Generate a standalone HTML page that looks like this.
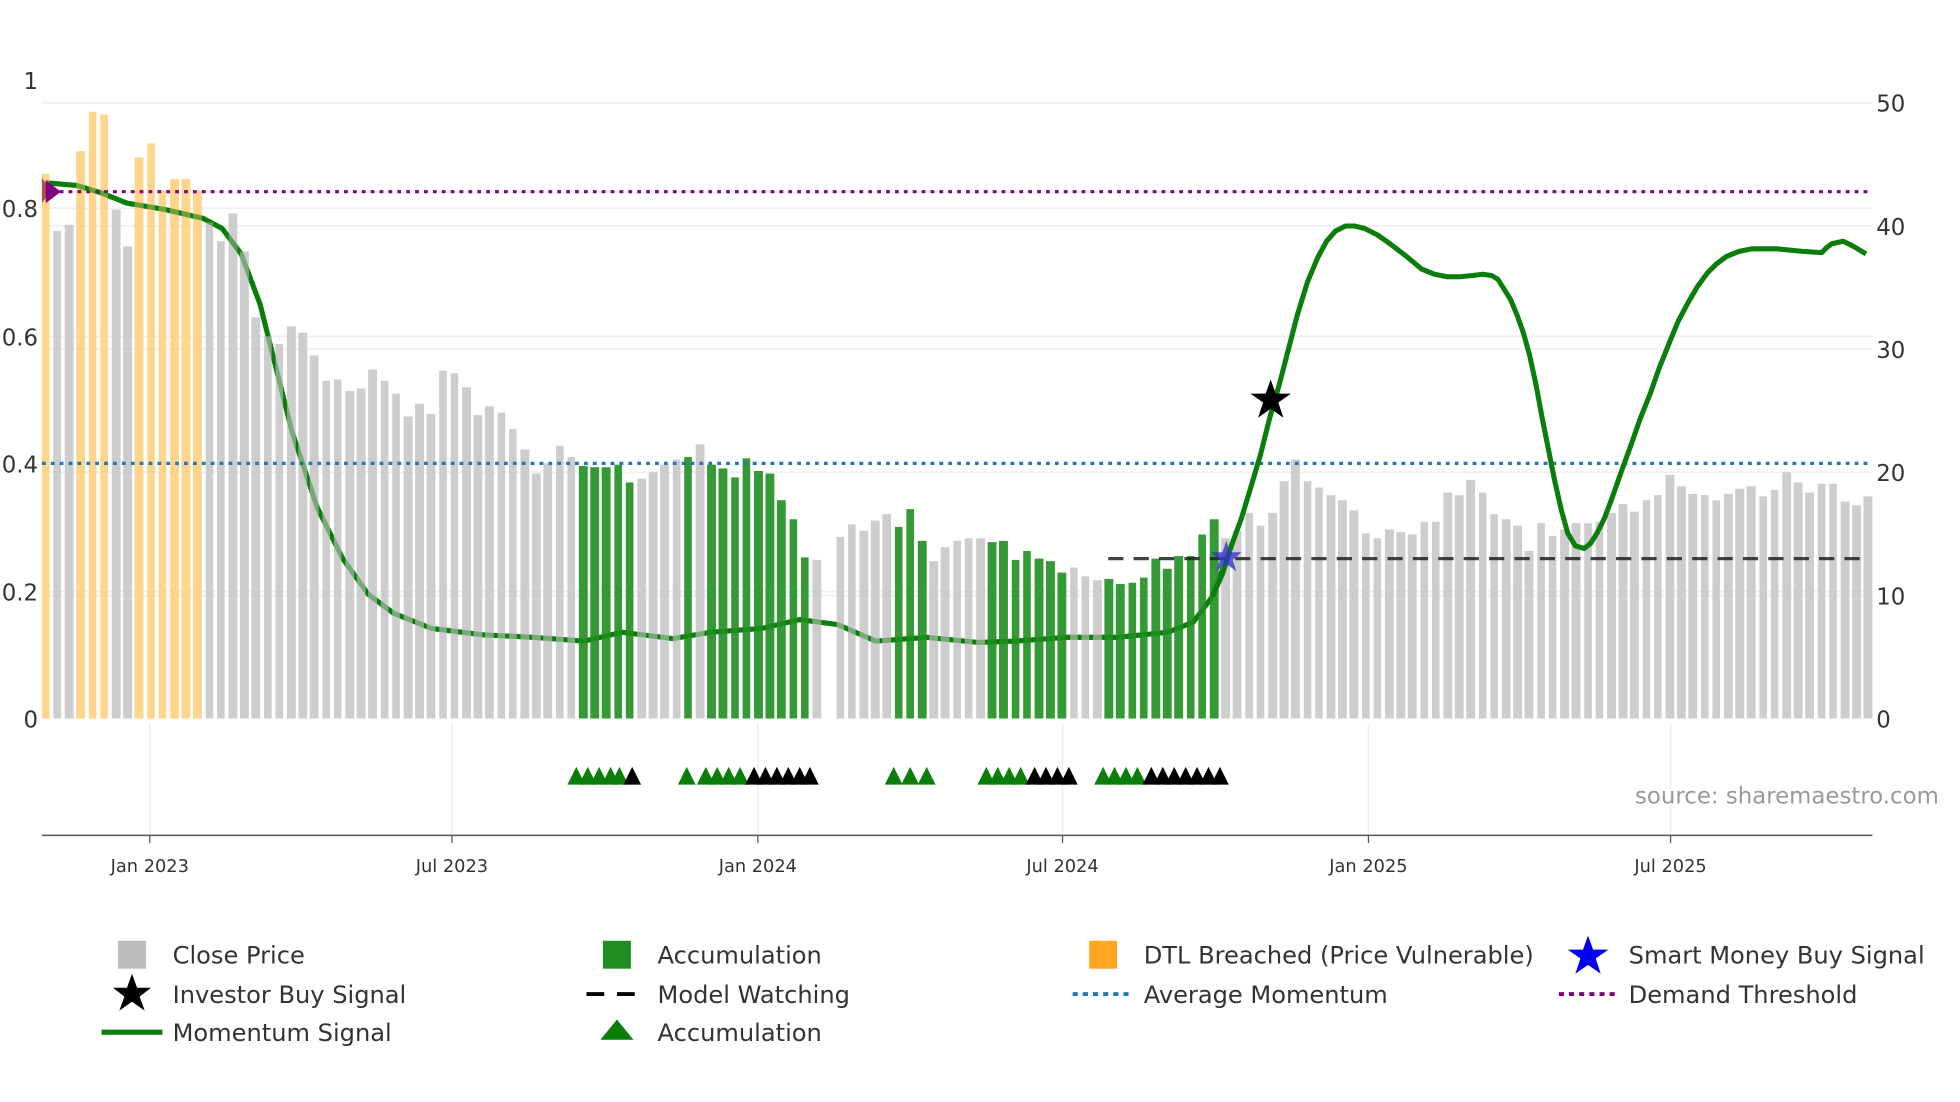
<!DOCTYPE html>
<html><head><meta charset="utf-8"><style>
html,body{margin:0;padding:0;background:#fff;}
svg{display:block;font-family:"DejaVu Sans","Liberation Sans",sans-serif;}
.bars{width:1443px;height:566px;display:flex;align-items:flex-end;justify-content:space-between;}
.bars i{display:block;width:6.6px;background:#c8c8c8;opacity:.9;flex:none;}
.bars i.o{background:#ffd080;}
.bars i.g{background:#2a952a;opacity:.95;}
</style></head><body>
<svg width="1960" height="1102" viewBox="0 0 1544 868" preserveAspectRatio="none" xmlns="http://www.w3.org/2000/svg">
<rect width="1544" height="868" fill="#fff"/>
<g stroke="#ebeef2" stroke-width="1.2">
<line x1="33" y1="81" x2="1475" y2="81"/><line x1="33" y1="178" x2="1475" y2="178"/>
<line x1="33" y1="275" x2="1475" y2="275"/><line x1="33" y1="372" x2="1475" y2="372"/>
<line x1="33" y1="469" x2="1475" y2="469"/>
<line x1="33" y1="164" x2="1475" y2="164"/><line x1="33" y1="265" x2="1475" y2="265"/>
<line x1="33" y1="466" x2="1475" y2="466"/>
<line x1="118" y1="570" x2="118" y2="658"/><line x1="356" y1="570" x2="356" y2="658"/>
<line x1="597" y1="570" x2="597" y2="658"/><line x1="837" y1="570" x2="837" y2="658"/>
<line x1="1078" y1="570" x2="1078" y2="658"/><line x1="1316" y1="570" x2="1316" y2="658"/>
</g>
<polyline fill="none" stroke="#0a7d0a" stroke-width="4" stroke-linejoin="round" points="36,144 60,146 80,152 100,160 130,165 160,172 175,180 190,200 205,240 215,280 230,340 250,400 270,440 290,468 310,483 340,495 380,500 420,502 460,505 490,498 530,503 560,498 600,495 630,488 660,492 690,505 730,502 770,506 800,505 840,502 880,502 920,498 940,490 955,470 970,430"/>
<foreignObject x="32.7" y="0" width="1443" height="566"><div xmlns="http://www.w3.org/1999/xhtml" class="bars">
<i class="o" style="height:429px"></i><i style="height:384px"></i><i style="height:389px"></i><i class="o" style="height:447px"></i><i class="o" style="height:478px"></i><i class="o" style="height:476px"></i><i style="height:401px"></i><i style="height:372px"></i><i class="o" style="height:442px"></i><i class="o" style="height:453px"></i><i class="o" style="height:416px"></i><i class="o" style="height:425px"></i><i class="o" style="height:425px"></i><i class="o" style="height:416px"></i><i style="height:391px"></i><i style="height:376px"></i><i style="height:398px"></i><i style="height:368px"></i><i style="height:316px"></i><i style="height:301px"></i><i style="height:295px"></i><i style="height:309px"></i><i style="height:304px"></i><i style="height:286px"></i><i style="height:266px"></i><i style="height:267px"></i><i style="height:258px"></i><i style="height:260px"></i><i style="height:275px"></i><i style="height:266px"></i><i style="height:256px"></i><i style="height:238px"></i><i style="height:248px"></i><i style="height:240px"></i><i style="height:274px"></i><i style="height:272px"></i><i style="height:261px"></i><i style="height:239px"></i><i style="height:246px"></i><i style="height:241px"></i><i style="height:228px"></i><i style="height:212px"></i><i style="height:193px"></i><i style="height:201px"></i><i style="height:215px"></i><i style="height:206px"></i>
<i class="g" style="height:199px"></i><i class="g" style="height:198px"></i><i class="g" style="height:198px"></i><i class="g" style="height:200px"></i><i class="g" style="height:186px"></i>
<i style="height:189px"></i><i style="height:194px"></i><i style="height:200px"></i><i style="height:204px"></i>
<i class="g" style="height:206px"></i><i style="height:216px"></i><i class="g" style="height:200px"></i><i class="g" style="height:197px"></i><i class="g" style="height:190px"></i><i class="g" style="height:205px"></i><i class="g" style="height:195px"></i><i class="g" style="height:193px"></i><i class="g" style="height:172px"></i><i class="g" style="height:157px"></i><i class="g" style="height:127px"></i><i style="height:125px"></i><i style="height:0px"></i>
<i style="height:143px"></i><i style="height:153px"></i><i style="height:148px"></i><i style="height:156px"></i><i style="height:161px"></i><i class="g" style="height:151px"></i><i class="g" style="height:165px"></i><i class="g" style="height:140px"></i><i style="height:124px"></i><i style="height:135px"></i><i style="height:140px"></i><i style="height:142px"></i><i style="height:142px"></i><i class="g" style="height:139px"></i><i class="g" style="height:140px"></i><i class="g" style="height:125px"></i><i class="g" style="height:132px"></i><i class="g" style="height:126px"></i><i class="g" style="height:124px"></i><i class="g" style="height:115px"></i><i style="height:119px"></i><i style="height:112px"></i><i style="height:109px"></i><i class="g" style="height:110px"></i><i class="g" style="height:106px"></i><i class="g" style="height:107px"></i><i class="g" style="height:111px"></i><i class="g" style="height:126px"></i><i class="g" style="height:118px"></i><i class="g" style="height:128px"></i><i class="g" style="height:128px"></i><i class="g" style="height:145px"></i><i class="g" style="height:157px"></i>
<i style="height:142px"></i><i style="height:148px"></i><i style="height:162px"></i><i style="height:152px"></i><i style="height:162px"></i><i style="height:187px"></i><i style="height:204px"></i><i style="height:187px"></i><i style="height:182px"></i><i style="height:176px"></i><i style="height:172px"></i><i style="height:164px"></i><i style="height:146px"></i><i style="height:142px"></i><i style="height:149px"></i><i style="height:147px"></i><i style="height:145px"></i><i style="height:155px"></i><i style="height:155px"></i><i style="height:178px"></i><i style="height:176px"></i><i style="height:188px"></i><i style="height:178px"></i><i style="height:161px"></i><i style="height:157px"></i><i style="height:152px"></i><i style="height:132px"></i><i style="height:154px"></i><i style="height:144px"></i><i style="height:149px"></i><i style="height:154px"></i><i style="height:154px"></i><i style="height:155px"></i><i style="height:162px"></i><i style="height:169px"></i><i style="height:163px"></i><i style="height:172px"></i><i style="height:176px"></i><i style="height:192px"></i><i style="height:183px"></i><i style="height:177px"></i><i style="height:176px"></i><i style="height:172px"></i><i style="height:177px"></i><i style="height:181px"></i><i style="height:183px"></i><i style="height:175px"></i><i style="height:180px"></i><i style="height:194px"></i><i style="height:186px"></i><i style="height:178px"></i><i style="height:185px"></i><i style="height:185px"></i><i style="height:171px"></i><i style="height:168px"></i><i style="height:175px"></i>
</div></foreignObject>
<line x1="33" y1="151" x2="1475" y2="151" stroke="#800080" stroke-width="2.5" stroke-dasharray="3,4"/>
<line x1="33" y1="365" x2="1475" y2="365" stroke="#1f77b4" stroke-width="2.5" stroke-dasharray="3,4"/>
<line x1="873" y1="440" x2="1470" y2="440" stroke="#222" stroke-width="2.5" stroke-dasharray="12,8" opacity="0.85"/>
<polyline fill="none" stroke="#0a7d0a" stroke-width="4" stroke-linejoin="round" opacity="0.55" points="36,144 60,146 80,152 100,160 130,165 160,172 175,180 190,200"/>
<polyline fill="none" stroke="#0a7d0a" stroke-width="4" stroke-linejoin="round" opacity="0.35" points="190,200 205,240 215,280 230,340 250,400 270,440 290,468 310,483 340,495 380,500 420,502 460,505 490,498 530,503 560,498 600,495 630,488 660,492 690,505 730,502 770,506 800,505 840,502 880,502 920,498 940,490 955,470"/>
<polyline fill="none" stroke="#0a7d0a" stroke-width="4" stroke-linejoin="round" points="955,470 963,452 970,430 978,408 985,385 993,358 1000,330 1008,302 1015,275 1022,248 1030,222 1038,203 1045,190 1052,182 1060,178 1067,178 1075,180 1085,185 1095,192 1108,202 1120,212 1130,216 1140,218 1150,218 1160,217 1168,216 1175,217 1180,220 1185,228 1190,236 1195,248 1200,262 1205,280 1210,303 1215,330 1220,355 1225,380 1230,402 1235,420 1241,430 1248,432 1253,428 1258,420 1264,408 1270,392 1277,372 1285,350 1292,330 1300,310 1307,290 1315,270 1322,253 1330,238 1337,226 1345,215 1352,208 1360,202 1370,198 1380,196 1400,196 1420,198 1435,199 1439,195 1443,192 1452,190 1460,194 1470,200"/>
<polygon points="33,140 40,150 33,160" fill="#b0504a"/><polygon points="36,142 48,151 36,160" fill="#800080"/>
<polygon points="966,426 969,435 978,435 971,441 974,450 966,444 958,450 961,441 954,435 963,435" fill="#3333cc" opacity="0.8"/>
<polygon points="1001,299 1005,310 1017,310 1007,317 1011,329 1001,322 991,329 995,317 985,310 997,310" fill="#000"/>
<g fill="#0a7d0a">
<polygon points="447,618 454,604 461,618"/><polygon points="456,618 463,604 470,618"/><polygon points="465,618 472,604 479,618"/><polygon points="474,618 481,604 488,618"/><polygon points="481,618 488,604 495,618"/>
<polygon points="534,618 541,604 548,618"/><polygon points="549,618 556,604 563,618"/><polygon points="558,618 565,604 572,618"/><polygon points="567,618 574,604 581,618"/><polygon points="576,618 583,604 590,618"/>
<polygon points="697,618 704,604 711,618"/><polygon points="710,618 717,604 724,618"/><polygon points="723,618 730,604 737,618"/>
<polygon points="770,618 777,604 784,618"/><polygon points="779,618 786,604 793,618"/><polygon points="788,618 795,604 802,618"/><polygon points="797,618 804,604 811,618"/>
<polygon points="862,618 869,604 876,618"/><polygon points="871,618 878,604 885,618"/><polygon points="880,618 887,604 894,618"/><polygon points="889,618 896,604 903,618"/>
</g>
<g fill="#000">
<polygon points="491,618 498,604 505,618"/>
<polygon points="587,618 594,604 601,618"/><polygon points="596,618 603,604 610,618"/><polygon points="605,618 612,604 619,618"/><polygon points="614,618 621,604 628,618"/><polygon points="623,618 630,604 637,618"/><polygon points="631,618 638,604 645,618"/>
<polygon points="808,618 815,604 822,618"/><polygon points="817,618 824,604 831,618"/><polygon points="826,618 833,604 840,618"/><polygon points="835,618 842,604 849,618"/>
<polygon points="900,618 907,604 914,618"/><polygon points="909,618 916,604 923,618"/><polygon points="918,618 925,604 932,618"/><polygon points="927,618 934,604 941,618"/><polygon points="936,618 943,604 950,618"/><polygon points="945,618 952,604 959,618"/><polygon points="954,618 961,604 968,618"/>
</g>
<line x1="33" y1="658" x2="1475" y2="658" stroke="#555" stroke-width="1.2"/>
<g stroke="#555"><line x1="118" y1="658" x2="118" y2="664"/><line x1="356" y1="658" x2="356" y2="664"/><line x1="597" y1="658" x2="597" y2="664"/><line x1="837" y1="658" x2="837" y2="664"/><line x1="1078" y1="658" x2="1078" y2="664"/><line x1="1316" y1="658" x2="1316" y2="664"/></g>
<g font-size="14" fill="#333" text-anchor="middle">
<text x="118" y="687">Jan 2023</text><text x="356" y="687">Jul 2023</text><text x="597" y="687">Jan 2024</text><text x="837" y="687">Jul 2024</text><text x="1078" y="687">Jan 2025</text><text x="1316" y="687">Jul 2025</text>
</g>
<g font-size="18" fill="#333" text-anchor="end">
<text x="30" y="70">1</text><text x="30" y="171">0.8</text><text x="30" y="272">0.6</text><text x="30" y="372">0.4</text><text x="30" y="473">0.2</text><text x="30" y="573">0</text>
</g>
<g font-size="18" fill="#333">
<text x="1478" y="88">50</text><text x="1478" y="185">40</text><text x="1478" y="282">30</text><text x="1478" y="379">20</text><text x="1478" y="476">10</text><text x="1478" y="573">0</text>
</g>
<text x="1288" y="633" font-size="18" fill="#999">source: sharemaestro.com</text>
<g font-size="19" fill="#333">
<rect x="93" y="741" width="22" height="22" fill="#bbb"/><text x="136" y="759">Close Price</text>
<polygon points="104,767 108,778 119,778 110,785 114,796 104,789 94,796 98,785 89,778 100,778" fill="#000"/><text x="136" y="790">Investor Buy Signal</text>
<line x1="80" y1="813" x2="128" y2="813" stroke="#0a7d0a" stroke-width="4"/><text x="136" y="820">Momentum Signal</text>
<rect x="475" y="741" width="22" height="22" fill="#228b22"/><text x="518" y="759">Accumulation</text>
<line x1="462" y1="783" x2="508" y2="783" stroke="#000" stroke-width="3" stroke-dasharray="14,10"/><text x="518" y="790">Model Watching</text>
<polygon points="486,803 499,819 473,819" fill="#0a7d0a"/><text x="518" y="820">Accumulation</text>
<rect x="858" y="741" width="22" height="22" fill="#ffa520"/><text x="901" y="759">DTL Breached (Price Vulnerable)</text>
<line x1="845" y1="783" x2="891" y2="783" stroke="#1f77b4" stroke-width="3" stroke-dasharray="4,4"/><text x="901" y="790">Average Momentum</text>
<polygon points="1251,737 1255,748 1267,748 1257,755 1261,767 1251,760 1241,767 1245,755 1235,748 1247,748" fill="#0000ee"/><text x="1283" y="759">Smart Money Buy Signal</text>
<line x1="1228" y1="783" x2="1274" y2="783" stroke="#800080" stroke-width="3" stroke-dasharray="4,4"/><text x="1283" y="790">Demand Threshold</text>
</g>
</svg>
</body></html>
